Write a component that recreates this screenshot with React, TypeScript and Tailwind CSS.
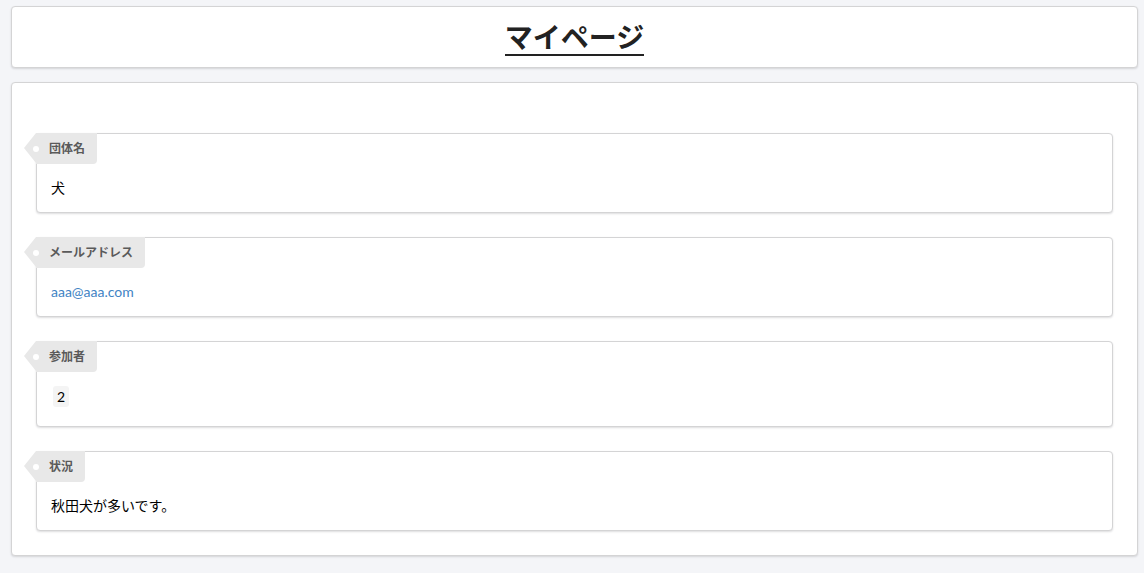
import React from "react";

function Tag({ text }: { text: string }) {
  return (
    <div className="absolute left-[-1px] top-[-1px] h-[31px] bg-[#e8e8e8] pl-[13px] pr-[12px] rounded-br-[4px] text-[12px] leading-[31px] font-bold text-[#5a5a5a]">
      <span className="absolute right-full top-0 w-0 h-0 border-r-[12px] border-r-[#e8e8e8] border-y-[15.5px] border-y-transparent" />
      <span className="absolute left-[-3px] top-[13px] w-[6px] h-[6px] rounded-full bg-white" />
      {text}
    </div>
  );
}

function Segment({ label, children }: { label: string; children: React.ReactNode }) {
  return (
    <div className="relative bg-white border border-[#d4d4d5] rounded-[4px] shadow-[0_1px_2px_0_rgba(34,36,38,0.15)] pt-[44px] pb-[14px] px-[14px] text-[14px] leading-[20px] text-black">
      <Tag text={label} />
      {children}
    </div>
  );
}

export default function App() {
  return (
    <div
      className="min-h-[573px] bg-[#f4f5f8] pl-[11px] pr-[6px] pt-[6px] pb-[16px]"
      style={{ fontFamily: 'Lato, "Noto Sans CJK JP", sans-serif' }}
    >
      <div className="bg-white border border-[#d4d4d5] rounded-[4px] shadow-[0_1px_2px_0_rgba(34,36,38,0.15)] pt-[11px] pb-[11px] flex justify-center">
        <h1 className="text-[28px] leading-[36px] font-bold text-[#222] border-b-2 border-[#222]" style={{ fontFamily: '"Noto Sans CJK JP", sans-serif' }}>
          マイページ
        </h1>
      </div>
      <div className="mt-[14px] bg-white border border-[#d4d4d5] rounded-[4px] shadow-[0_1px_2px_0_rgba(34,36,38,0.15)] pt-[50px] pb-[24px] px-[24px] flex flex-col gap-[24px]">
        <Segment label="団体名">
          <div>犬</div>
        </Segment>
        <Segment label="メールアドレス">
          <a className="text-[#4183c4]">aaa@aaa.com</a>
        </Segment>
        <Segment label="参加者">
          <div className="h-[26px]">
            <span className="inline-block ml-[2px] px-[4px] rounded-[3px] bg-[#f4f4f4] leading-[21px]">2</span>
          </div>
        </Segment>
        <Segment label="状況">
          <div>秋田犬が多いです。</div>
        </Segment>
      </div>
    </div>
  );
}
